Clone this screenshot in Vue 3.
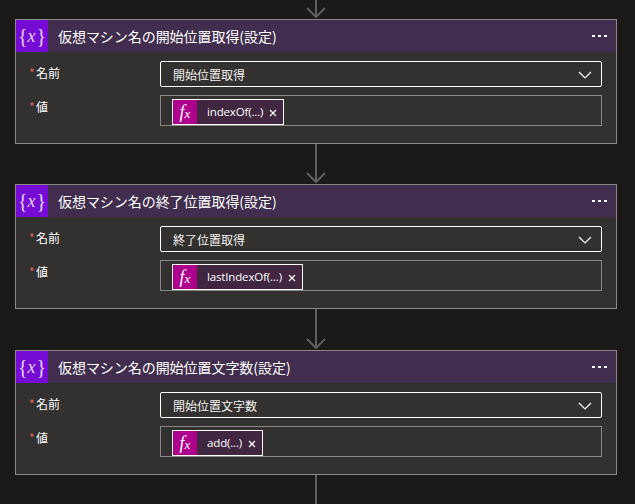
<script setup>
const cards = [
  { title: '仮想マシン名の開始位置取得(設定)', name: '開始位置取得', token: 'indexOf(...)' },
  { title: '仮想マシン名の終了位置取得(設定)', name: '終了位置取得', token: 'lastIndexOf(...)' },
  { title: '仮想マシン名の開始位置文字数(設定)', name: '開始位置文字数', token: 'add(...)' },
]
</script>

<template>
  <div class="page">
    <div class="arrow first">
      <div class="line"></div>
      <svg class="head" width="20" height="11" viewBox="0 0 20 11"><path d="M1 1l9 9 9-9" /></svg>
    </div>
    <template v-for="(c, i) in cards" :key="c.title">
      <section class="card">
        <header class="head-bar">
          <div class="var-icon"><span class="brace">{</span><span class="x">x</span><span class="brace">}</span></div>
          <div class="title">{{ c.title }}</div>
          <div class="dots"><i></i><i></i><i></i></div>
        </header>
        <div class="body">
          <div class="row">
            <label class="label"><span class="req">*</span>名前</label>
            <div class="select">
              <span class="select-text">{{ c.name }}</span>
              <svg width="14" height="8" viewBox="0 0 14 8" class="chev"><path d="M1 1l6 6 6-6" /></svg>
            </div>
          </div>
          <div class="row second">
            <label class="label"><span class="req">*</span>値</label>
            <div class="value">
              <div class="token">
                <span class="fx"><em>f</em><em class="sub">x</em></span>
                <span class="token-text">{{ c.token }}</span>
                <svg class="close" width="8" height="8" viewBox="0 0 8 8"><path d="M1 1l6 6M7 1L1 7" /></svg>
              </div>
            </div>
          </div>
        </div>
      </section>
      <div class="arrow" :class="{ tail: i === 2, wide: i === 1 }">
        <div class="line"></div>
        <svg v-if="i < 2" class="head" width="20" height="11" viewBox="0 0 20 11"><path d="M1 1l9 9 9-9" /></svg>
      </div>
    </template>
  </div>
</template>

<style>
html, body { margin: 0; background: #1b1a19; overflow: hidden; }
</style>

<style scoped>
.page {
  width: 635px;
  height: 504px;
  overflow: hidden;
  background: #1b1a19;
  padding-left: 15px;
  box-sizing: border-box;
  font-family: "Noto Sans CJK JP", "Open Sans", sans-serif;
  color: #fff;
}
.arrow {
  width: 602px;
  height: 40px;
  display: flex;
  flex-direction: column;
  align-items: center;
  justify-content: flex-end;
}
.arrow.wide { height: 41px; }
.arrow.first { height: 19px; }
.arrow.tail { height: 29px; justify-content: flex-start; }
.line { flex: 1; width: 2px; background: #605e5c; margin-bottom: -9px; }
.head { display: block; margin-bottom: 1px; flex: none; }
.head path { fill: none; stroke: #605e5c; stroke-width: 2; }
.card {
  width: 602px;
  height: 125px;
  box-sizing: border-box;
  border: 1px solid #8a8886;
  background: #323130;
}
.head-bar {
  height: 32px;
  background: #412d4d;
  display: flex;
  align-items: center;
}
.var-icon {
  width: 32px;
  height: 32px;
  background: #770bd6;
  display: flex;
  align-items: center;
  justify-content: center;
  font-family: "Liberation Serif", serif;
  line-height: 32px;
  color: #e6d6f5;
}
.brace { font-size: 20px; }
.x { font-style: italic; font-size: 18px; margin: 0 1px 0 0; }
.title {
  margin-left: 10px;
  font-size: 14px;
  letter-spacing: -0.05px;
  line-height: 32px;
  flex: 1;
  white-space: nowrap;
}
.dots { display: flex; gap: 3px; margin-right: 9px; }
.dots i { width: 3px; height: 2px; background: #fff; display: block; }
.body { padding: 9px 14px 0 0; }
.row { display: flex; }
.row.second { margin-top: 8px; }
.label {
  width: 144px;
  padding-left: 13px;
  box-sizing: border-box;
  font-size: 12px;
  line-height: 20px;
  margin-top: 2px;
  white-space: nowrap;
}
.row.second .label { margin-top: 2px; }
.req { display: inline-block; width: 7px; color: #e0605a; font-size: 12px; }
.select {
  width: 442px;
  height: 26px;
  box-sizing: border-box;
  border: 1px solid #fff;
  border-radius: 2px;
  display: flex;
  align-items: center;
  justify-content: space-between;
  padding: 0 9px 0 12px;
}
.select-text { font-size: 12px; line-height: 24px; padding-top: 1px; color: #f3f2f1; }
.chev { margin-top: 2px; }
.chev path { fill: none; stroke: #fff; stroke-width: 1.2; }
.value {
  width: 442px;
  height: 31px;
  box-sizing: border-box;
  border: 1px solid #8a8886;
  padding: 3px 0 0 11px;
}
.token {
  display: inline-flex;
  align-items: center;
  height: 26px;
  box-sizing: border-box;
  border: 1px solid #fff;
  background: #412640;
}
.fx {
  width: 24px;
  height: 24px;
  background: #ad008c;
  display: flex;
  align-items: center;
  justify-content: center;
  font-family: "Liberation Serif", serif;
  font-size: 18px;
  line-height: 24px;
}
.fx em { font-style: italic; }
.fx .sub { font-size: 13px; margin-top: 3px; margin-left: 0; }
.token-text {
  margin-left: 10px;
  font-family: "Open Sans", sans-serif;
  font-size: 11.5px;
  letter-spacing: -0.15px;
  line-height: 24px;
  white-space: nowrap;
}
.close { margin: 1px 6px 0 6px; width: 8px; }
.close path { fill: none; stroke: #fff; stroke-width: 1.2; }
</style>
